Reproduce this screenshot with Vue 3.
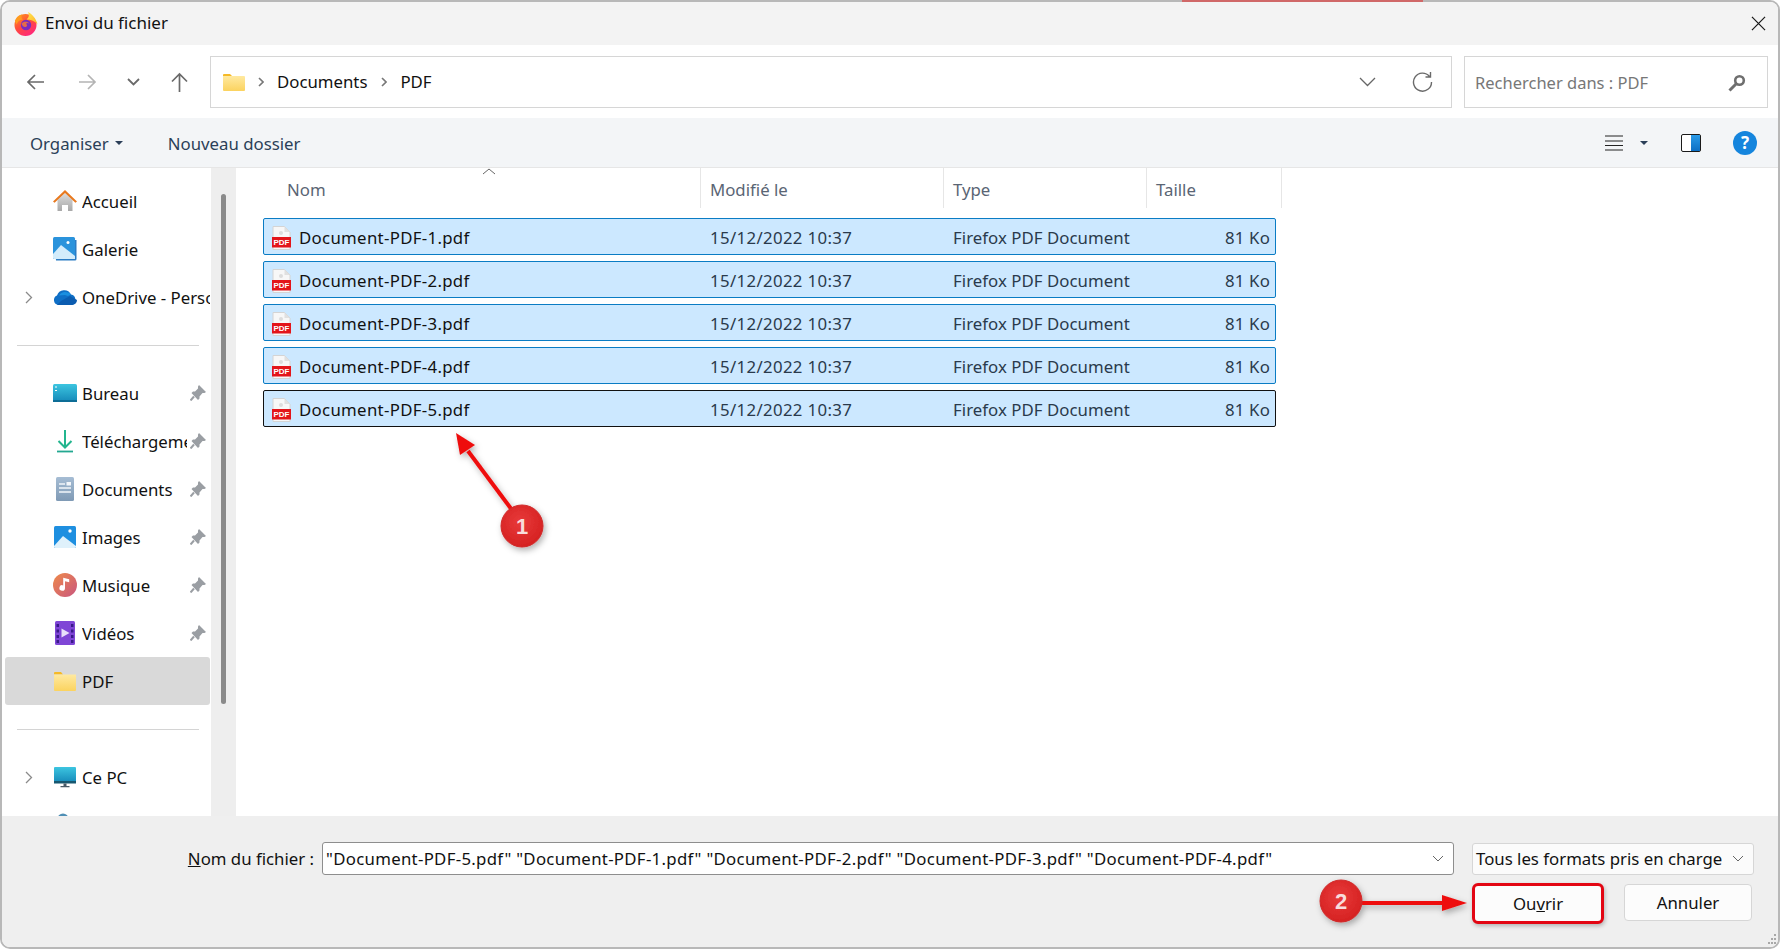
<!--
Boîte de dialogue Windows "Envoi du fichier"
-->
<template>
  <div class="page">
    <div class="behind-strip"></div>
    <div class="dialog">
      <div class="titlebar">
        <svg class="fx" viewBox="0 0 24 24">
          <circle cx="11.5" cy="13" r="11" fill="url(#fxBody)" />
          <path d="M14 0c3.500 2 8 5.500 9.500 12.500C21 9 17 7.500 12.500 7.500 15 6 15.500 3 14 0z" fill="url(#fxFlame)" />
          <path d="M.8 9C2.500 4.500 5.500 2.800 8 2.500 7 4.800 7.500 6.500 9 7.500 5.500 8 3.500 9.500 2.800 12.500z" fill="#ff9a1f" />
          <circle cx="12" cy="13" r="5.200" fill="#7a2bbf" />
          <path d="M7.500 11.500c2-2.500 6-2.500 8 0-2-1-3-.5-3.500.5 1.500.5 1.500 2.500-.5 3-2 .3-3.500-1.500-4-3.500z" fill="#ff7a2a" opacity=".8" />
        </svg>
        <span class="title">Envoi du fichier</span>
        <svg class="close" viewBox="0 0 16 16"><path d="M1 1l14 14M15 1L1 15" stroke="#1a1a1a" stroke-width="1.3" /></svg>
      </div>

      <div class="navbar">
        <div class="navbtn">
          <svg width="19" height="18" viewBox="0 0 19 18"><path d="M18 9H2M9 2L2 9l7 7" fill="none" stroke="#6a6a6a" stroke-width="1.7" /></svg>
        </div>
        <div class="navbtn">
          <svg width="19" height="18" viewBox="0 0 19 18"><path d="M1 9h16M10 2l7 7-7 7" fill="none" stroke="#b4b4b4" stroke-width="1.7" /></svg>
        </div>
        <div class="navbtn small">
          <svg width="13" height="8" viewBox="0 0 13 8"><path d="M1 1l5.500 5.500L12 1" fill="none" stroke="#6a6a6a" stroke-width="1.8" /></svg>
        </div>
        <div class="navbtn">
          <svg width="19" height="20" viewBox="0 0 19 20"><path d="M9.500 20V2M2 9.500l7.500-7.500L17 9.500" fill="none" stroke="#6a6a6a" stroke-width="1.7" /></svg>
        </div>
        <div class="address">
          <svg class="addr-folder" width="22" height="18" viewBox="0 0 22 18">
            <path d="M0 2a1 1 0 0 1 1-1h6l2 2h-9z" fill="#f5b926" />
            <path d="M0 3h21a1 1 0 0 1 1 1v13a1 1 0 0 1-1 1H1a1 1 0 0 1-1-1z" fill="url(#folderFill)" />
          </svg>
          <svg class="crumb-sep" width="6" height="10" viewBox="0 0 6 10"><path d="M1 1l4 4-4 4" fill="none" stroke="#777" stroke-width="1.6" /></svg>
          <span class="crumb">Documents</span>
          <svg class="crumb-sep" width="6" height="10" viewBox="0 0 6 10"><path d="M1 1l4 4-4 4" fill="none" stroke="#777" stroke-width="1.6" /></svg>
          <span class="crumb">PDF</span>
          <svg class="addr-chevron" width="17" height="10" viewBox="0 0 17 10"><path d="M1 1l7.500 7.500L16 1" fill="none" stroke="#666" stroke-width="1.3" /></svg>
          <svg class="addr-refresh" width="21" height="21" viewBox="0 0 21 21"><path d="M17.500 5.500A9 9 0 1 0 19.500 11M18.500 1v5h-5" fill="none" stroke="#6a6a6a" stroke-width="1.4" /></svg>
        </div>
        <div class="search">
          <span>Rechercher dans : PDF</span>
          <svg width="18" height="18" viewBox="0 0 18 18"><circle cx="11.500" cy="6.500" r="4.300" fill="none" stroke="#6f6f6f" stroke-width="2.6" /><path d="M8 10l-6.500 6.500" stroke="#6f6f6f" stroke-width="3" /></svg>
        </div>
      </div>

      <div class="toolbar">
        <span class="tool">Organiser</span>
        <span class="tool-caret"></span>
        <span class="tool new-folder">Nouveau dossier</span>
        <svg class="view-list" width="18" height="16" viewBox="0 0 18 16"><path d="M0 1h18M0 6h18M0 10.500h18M0 15h18" stroke="#222" stroke-width="1" /></svg>
        <span class="tool-caret view-caret"></span>
        <svg class="pane" width="20" height="18" viewBox="0 0 20 18">
          <rect x=".5" y=".5" width="19" height="17" rx="1.5" fill="#fff" stroke="#1a1a1a" />
          <rect x="10" y="1" width="9" height="16" fill="url(#paneFill)" />
        </svg>
        <div class="help">?</div>
      </div>

      <div class="body">
        <aside class="sidebar">
          <template v-for="item in navItems" :key="item.label || item.id">
            <div v-if="item.divider" class="nav-divider"><i></i></div>
            <div v-else class="nav-row" :class="{ active: item.active }">
              <svg v-if="item.expand" class="expand" width="8" height="13" viewBox="0 0 8 13"><path d="M1 1l5.500 5.500L1 12" fill="none" stroke="#8a8a8a" stroke-width="1.3" /></svg>
              <span v-else class="expand"></span>
              <svg class="nav-icon" viewBox="0 0 24 24">
                <template v-if="item.icon === 'home'">
                  <path d="M4.500 11L12 4l7.500 7v11h-4.500v-6H9v6H4.500z" fill="url(#homeFill)" />
                  <path d="M0 12.500L12 1l12 11.500-1.600 1.300L12 4 1.600 13.800z" fill="#e8791f" />
                </template>
                <template v-else-if="item.icon === 'gallery'">
                  <path d="M2 3h21.500v19a1.500 1.500 0 0 1-1.500 1.500H3z" fill="#2b7cc4" />
                  <rect y="0" width="22" height="22" rx="1.5" fill="#2a93dc" />
                  <circle cx="15" cy="5.500" r="1.500" fill="#fff" />
                  <path d="M0 17l8-9 14 11v3H1.500A1.500 1.500 0 0 1 0 20.500z" fill="#d3ecfb" />
                </template>
                <template v-else-if="item.icon === 'cloud'">
                  <path d="M5 20A5 5 0 0 1 4 10.500 7.500 7.500 0 0 1 18 9.500 5.500 5.500 0 0 1 19 20z" fill="#0f6fc6" />
                  <path d="M4 20h15a5 5 0 0 0 5-5l-7-4-9 5z" fill="#0b5cb0" />
                  <path d="M6 10.500A7.500 7.500 0 0 1 18 9.500l-3 1.500-3-1z" fill="#1a8fe0" />
                </template>
                <template v-else-if="item.icon === 'desktop'">
                  <rect y="3" width="24" height="18" rx="1.5" fill="url(#deskFill)" />
                  <path d="M2 6h2M2 9.500h2" stroke="#fff" stroke-width="1.2" />
                  <rect y="19" width="24" height="2" fill="#0d6d96" />
                </template>
                <template v-else-if="item.icon === 'download'">
                  <path d="M12 1v17M5.500 12l6.500 6.500 6.500-6.500" fill="none" stroke="#23b58e" stroke-width="2" />
                  <path d="M4 22.500h16" stroke="#23a891" stroke-width="1.8" />
                </template>
                <template v-else-if="item.icon === 'doc'">
                  <rect x="3" width="18" height="24" rx="1.5" fill="url(#docFill)" />
                  <path d="M6 7h6M6 11h12M6 15h12" stroke="#f2f6fa" stroke-width="1.4" />
                  <rect x="13.500" y="5" width="4.500" height="3.500" fill="#f2f6fa" />
                </template>
                <template v-else-if="item.icon === 'image'">
                  <rect x="1" y="1" width="22" height="22" rx="1.5" fill="#1e8fe0" />
                  <circle cx="17" cy="6" r="1.700" fill="#fff" />
                  <path d="M1 21l9-10 13 10v.5a1.500 1.500 0 0 1-1.500 1.500h-19A1.500 1.500 0 0 1 1 21.500z" fill="#dff1fb" />
                </template>
                <template v-else-if="item.icon === 'music'">
                  <circle cx="12" cy="12" r="12" fill="url(#musicFill)" />
                  <path d="M12 5.500v9.500a2.800 2.800 0 1 1-1.800-2.600V4.800l6 1.500v3l-4.200-1z" fill="#fff" />
                </template>
                <template v-else-if="item.icon === 'video'">
                  <rect x="2" width="20" height="24" rx="1.5" fill="#7f46d6" />
                  <path d="M3.500 3h2.500v3H3.500zM3.500 8.500h2.500v3H3.500zM3.500 14h2.500v3H3.500zM3.500 19h2.500v3H3.500zM18 3h2.500v3H18zM18 8.500h2.500v3H18zM18 14h2.500v3H18zM18 19h2.500v3H18z" fill="#3a1a8a" />
                  <path d="M8.500 7.500l8 4.500-8 4.500z" fill="#e8e0fa" />
                </template>
                <template v-else-if="item.icon === 'folder'">
                  <path d="M1 4a1 1 0 0 1 1-1h6l2 2.500H1z" fill="#f5b926" />
                  <path d="M1 5.500h22V21a1 1 0 0 1-1 1H2a1 1 0 0 1-1-1z" fill="url(#folderFill)" />
                </template>
                <template v-else-if="item.icon === 'pc'">
                  <rect x="1" y="2" width="22" height="16" rx="1" fill="url(#deskFill)" />
                  <rect x="1" y="16" width="22" height="2.5" fill="#17576f" />
                  <path d="M10.500 18.500h3v2.500h-3zM7.500 21h9v1.200h-9z" fill="#4a5a66" />
                </template>
                <template v-else-if="item.icon === 'network'">
                  <circle cx="10" cy="6" r="5.500" fill="#4f8fb5" />
                </template>
              </svg>
              <span class="nav-label">{{ item.label }}</span>
              <svg v-if="item.pinned" class="pin" width="16" height="16" viewBox="0 0 16 16">
                <path d="M9 0l7 7-1.500 1h-2l-3 3.500v2L8 15 1.500 8 3 6.500h2l3-3v-2z" fill="#9a9ea3" />
                <path d="M4 11.500L.5 15.500" stroke="#9a9ea3" stroke-width="2" />
              </svg>
            </div>
          </template>
        </aside>

        <div class="gutter"><div class="thumb"></div></div>

        <main class="files">
          <div class="file-header">
            <svg class="sort" width="14" height="7" viewBox="0 0 14 7"><path d="M1 6l6-5 6 5" fill="none" stroke="#666" stroke-width="1" /></svg>
            <div class="col col-name">Nom</div>
            <div class="col col-date">Modifié le</div>
            <div class="col col-type">Type</div>
            <div class="col col-size">Taille</div>
          </div>
          <div class="file-list">
            <div v-for="(file, i) in files" :key="file" class="file-row" :class="{ focused: i === files.length - 1 }">
              <svg class="pdf" width="19" height="24" viewBox="0 0 19 24">
                <path d="M1 .5h11.500L18 6v17.500H1z" fill="#f7f7f7" stroke="#d4d4d4" />
                <path d="M12.500.5V6H18z" fill="#e0e0e0" />
                <circle cx="9" cy="7" r="2" fill="#dcdcdc" />
                <rect y="11" width="19" height="10.500" fill="#e3151a" />
                <text x="9.500" y="19.300" class="pdf-text">PDF</text>
              </svg>
              <span class="f-name">{{ file }}</span>
              <span class="f-date">15/12/2022 10:37</span>
              <span class="f-type">Firefox PDF Document</span>
              <span class="f-size">81 Ko</span>
            </div>
          </div>
        </main>
      </div>

      <footer class="footer">
        <div class="footer-row">
          <label class="name-label"><u>N</u>om du fichier :</label>
          <div class="name-input">
            <span>"Document-PDF-5.pdf" "Document-PDF-1.pdf" "Document-PDF-2.pdf" "Document-PDF-3.pdf" "Document-PDF-4.pdf"</span>
            <svg width="12" height="7" viewBox="0 0 12 7"><path d="M1 1l5 5 5-5" fill="none" stroke="#666" /></svg>
          </div>
          <div class="type-select">
            <span>Tous les formats pris en charge</span>
            <svg width="12" height="7" viewBox="0 0 12 7"><path d="M1 1l5 5 5-5" fill="none" stroke="#666" /></svg>
          </div>
        </div>
        <div class="footer-actions">
          <button class="btn open">Ou<u>v</u>rir</button>
          <button class="btn cancel">Annuler</button>
        </div>
      </footer>

      <svg class="grip" width="9" height="12" viewBox="0 0 9 12">
        <path d="M6 0h2v2H6zM3 4h2v2H3zM6 4h2v2H6zM0 8h2v2H0zM3 8h2v2H3zM6 8h2v2H6z" fill="#a8a8a8" />
      </svg>

      <!-- annotations -->
      <svg class="marks" width="1782" height="950" viewBox="0 0 1782 950">
        <defs>
          <linearGradient id="fxBody" x1="0" y1="0" x2=".6" y2="1"><stop offset="0" stop-color="#ff9a1c" /><stop offset=".55" stop-color="#ff4a3d" /><stop offset="1" stop-color="#ff2a78" /></linearGradient>
          <linearGradient id="fxFlame" x1="0" y1="0" x2="1" y2="1"><stop offset="0" stop-color="#ffe84d" /><stop offset="1" stop-color="#ffb02a" /></linearGradient>
          <linearGradient id="folderFill" x1="0" y1="0" x2="0" y2="1"><stop offset="0" stop-color="#ffe9a0" /><stop offset="1" stop-color="#fbd35f" /></linearGradient>
          <linearGradient id="paneFill" x1="0" y1="0" x2="0" y2="1"><stop offset="0" stop-color="#2a9be8" /><stop offset="1" stop-color="#0d6fc4" /></linearGradient>
          <linearGradient id="homeFill" x1="0" y1="0" x2="0" y2="1"><stop offset="0" stop-color="#dcdcdc" /><stop offset="1" stop-color="#a8a8a8" /></linearGradient>
          <linearGradient id="deskFill" x1="0" y1="0" x2="0" y2="1"><stop offset="0" stop-color="#3cc5e0" /><stop offset="1" stop-color="#1488b8" /></linearGradient>
          <linearGradient id="docFill" x1="0" y1="0" x2="0" y2="1"><stop offset="0" stop-color="#a6bdd4" /><stop offset="1" stop-color="#7f9ab5" /></linearGradient>
          <linearGradient id="musicFill" x1="0" y1="0" x2="1" y2="1"><stop offset="0" stop-color="#ee8a4a" /><stop offset="1" stop-color="#c9567f" /></linearGradient>
          <radialGradient id="badgeFill" cx=".45" cy=".4" r=".65"><stop offset="0" stop-color="#e83a3a" /><stop offset="1" stop-color="#d42020" /></radialGradient>
          <filter id="soft" x="-30%" y="-30%" width="160%" height="160%"><feDropShadow dx="2" dy="3" stdDeviation="3" flood-color="#000" flood-opacity=".3" /></filter>
        </defs>
        <g filter="url(#soft)">
          <path d="M468 451l44 59" stroke="#ee1111" stroke-width="4" />
          <path d="M456 433l19 12-15 10z" fill="#ee1111" />
          <circle cx="522" cy="526" r="21" fill="url(#badgeFill)" stroke="#cf2a2a" />
        </g>
        <text x="522" y="534" class="badge-num">1</text>
        <g filter="url(#soft)">
          <path d="M1360 903h84" stroke="#ee1111" stroke-width="4" />
          <path d="M1467 903l-25-8v16z" fill="#ee1111" />
          <circle cx="1341" cy="901" r="21" fill="url(#badgeFill)" stroke="#cf2a2a" />
        </g>
        <text x="1341" y="909" class="badge-num">2</text>
      </svg>
    </div>
  </div>
</template>

<script setup>
const navItems = [
  { label: "Accueil", icon: "home" },
  { label: "Galerie", icon: "gallery" },
  { label: "OneDrive - Personal", icon: "cloud", expand: true },
  { divider: true, id: "d1" },
  { label: "Bureau", icon: "desktop", pinned: true },
  { label: "Téléchargements", icon: "download", pinned: true },
  { label: "Documents", icon: "doc", pinned: true },
  { label: "Images", icon: "image", pinned: true },
  { label: "Musique", icon: "music", pinned: true },
  { label: "Vidéos", icon: "video", pinned: true },
  { label: "PDF", icon: "folder", active: true },
  { divider: true, id: "d2" },
  { label: "Ce PC", icon: "pc", expand: true },
  { id: "network", icon: "network" },
];

const files = [
  "Document-PDF-1.pdf",
  "Document-PDF-2.pdf",
  "Document-PDF-3.pdf",
  "Document-PDF-4.pdf",
  "Document-PDF-5.pdf",
];
</script>

<style>
html,
body {
  margin: 0;
  background: #fff;
}
</style>

<style scoped>
.page {
  position: relative;
  width: 1782px;
  height: 950px;
  overflow: hidden;
}

/* bout de la fenêtre derrière le dialogue */
.behind-strip {
  position: absolute;
  left: 1182px;
  top: 0;
  width: 241px;
  height: 2px;
  background: #d06868;
  z-index: 1;
}

.dialog {
  position: relative;
  width: 1780px;
  height: 949px;
  box-sizing: border-box;
  border: 2px solid #b8b8b8;
  border-radius: 10px;
  overflow: hidden;
  display: flex;
  flex-direction: column;
  background: #fff;
  font-family: "Noto Sans", "Liberation Sans", sans-serif;
  font-size: 16.8px;
  color: #111;
}

.titlebar {
  height: 43px;
  flex: none;
  display: flex;
  align-items: center;
  padding: 0 0 0 12px;
  background: #f3f3f3;
}

.fx {
  width: 24px;
  height: 24px;
  margin-right: 7px;
}

.title {
  font-size: 17px;
  margin-top: -2px;
}

.close {
  width: 15px;
  height: 15px;
  margin-left: auto;
  margin-right: 12px;
}

.navbar {
  height: 73px;
  flex: none;
  display: flex;
  align-items: center;
  padding: 0 10px 0 7px;
  box-sizing: border-box;
  background: #fff;
}

.navbtn {
  width: 52px;
  display: flex;
  justify-content: center;
}

.navbtn.small {
  width: 40px;
}

.address,
.search {
  height: 52px;
  box-sizing: border-box;
  border: 1px solid #d6d6d6;
  display: flex;
  align-items: center;
  background: #fff;
}

.address {
  flex: 1;
  margin-left: 5px;
  padding-left: 12px;
}

.addr-folder {
  margin-right: 13px;
}

.crumb-sep {
  margin-right: 13px;
}

.crumb {
  margin-right: 14px;
}

.addr-chevron {
  margin-left: auto;
  margin-right: 36px;
}

.addr-refresh {
  margin-right: 18px;
}

.search {
  width: 304px;
  margin-left: 12px;
  padding: 2px 21px 0 10px;
  justify-content: space-between;
  color: #777;
  font-size: 16.5px;
}

.toolbar {
  height: 50px;
  flex: none;
  box-sizing: border-box;
  display: flex;
  align-items: center;
  padding-left: 28px;
  background: #f3f5f7;
  border-bottom: 1px solid #e6e6e6;
}

.tool {
  color: #2b3f58;
  margin-top: 1px;
}

.tool-caret {
  width: 0;
  height: 0;
  margin-left: 6px;
  border: 4px solid transparent;
  border-top: 4px solid #2b3f58;
  border-bottom: 0;
}

.new-folder {
  margin-left: 45px;
}

.view-list {
  margin-left: auto;
}

.view-caret {
  margin-left: 17px;
}

.pane {
  margin-left: 33px;
}

.help {
  width: 24px;
  height: 24px;
  margin-left: 32px;
  margin-right: 21px;
  border-radius: 50%;
  background: #1585dd;
  color: #fff;
  font-size: 17px;
  font-weight: 700;
  line-height: 24px;
  text-align: center;
}

.body {
  flex: 1;
  min-height: 0;
  display: flex;
}

.sidebar {
  width: 209px;
  flex: none;
  box-sizing: border-box;
  padding: 9px 1px 0 3px;
  overflow: hidden;
  background: #fff;
}

.nav-row {
  height: 48px;
  display: flex;
  align-items: center;
  border-radius: 3px;
}

.nav-row.active {
  background: #d9d9d9;
}

.expand {
  width: 8px;
  flex: none;
  margin-left: 20px;
}

.nav-icon {
  width: 24px;
  height: 24px;
  flex: none;
  margin-left: 20px;
}

.nav-label {
  flex: 1;
  min-width: 0;
  margin-left: 5px;
  white-space: nowrap;
  overflow: hidden;
}

.pin {
  flex: none;
  margin: 0 4px 0 3px;
}

.nav-divider {
  height: 48px;
  display: flex;
  align-items: center;
  padding: 0 11px 0 12px;
}

.nav-divider i {
  flex: 1;
  height: 1px;
  background: #d4d4d4;
}

.gutter {
  width: 25px;
  flex: none;
  box-sizing: border-box;
  padding: 26px 0 0 10px;
  background: #eeeeee;
}

.thumb {
  width: 5px;
  height: 510px;
  border-radius: 3px;
  background: #8a8a8a;
}

.files {
  flex: 1;
  min-width: 0;
  background: #fff;
}

.file-header {
  position: relative;
  height: 47px;
  display: flex;
  color: #5a6574;
}

.sort {
  position: absolute;
  left: 246px;
  top: 0;
}

.col {
  height: 40px;
  line-height: 44px;
  box-sizing: border-box;
  padding-left: 9px;
  border-left: 1px solid #e6e6e6;
}

.col-name {
  width: 464px;
  padding-left: 51px;
  border-left: 0;
}

.col-date {
  width: 243px;
}

.col-type {
  width: 203px;
}

.col-size {
  width: 136px;
  border-right: 1px solid #e6e6e6;
}

.file-list {
  display: flex;
  flex-direction: column;
  gap: 6px;
  margin: 3px 0 0 27px;
  width: 1013px;
}

.file-row {
  height: 37px;
  box-sizing: border-box;
  display: flex;
  align-items: center;
  padding: 2px 5px 0 8px;
  background: #cce8ff;
  border: 1px solid #0a7cc4;
  border-radius: 2px;
  color: #2a3a4c;
}

.file-row.focused {
  border-color: #111;
}

.pdf {
  flex: none;
  margin-right: 8px;
}

.pdf-text {
  fill: #fff;
  font-family: "Liberation Sans", sans-serif;
  font-size: 8px;
  font-weight: 700;
  text-anchor: middle;
}

.f-name {
  width: 411px;
  color: #111;
  letter-spacing: 0.32px;
}

.f-date {
  width: 243px;
  letter-spacing: 0.35px;
}

.f-type {
  flex: 1;
  letter-spacing: 0.05px;
}

.f-size {
  flex: none;
  letter-spacing: 0.2px;
}

.footer {
  height: 131px;
  flex: none;
  box-sizing: border-box;
  padding: 26px 0 0;
  background: #efefef;
}

.footer-row {
  display: flex;
  align-items: center;
  padding-right: 24px;
}

.name-label {
  width: 312px;
  flex: none;
  text-align: right;
}

.name-input,
.type-select {
  box-sizing: border-box;
  display: flex;
  align-items: center;
  justify-content: space-between;
  white-space: nowrap;
}

.name-input {
  flex: 1;
  min-width: 0;
  height: 33px;
  margin-left: 8px;
  padding: 0 9px 0 3px;
  background: #fff;
  border: 1px solid #8e8e8e;
  border-radius: 3px;
  letter-spacing: 0.3px;
}

.type-select {
  width: 282px;
  flex: none;
  height: 32px;
  margin-left: 18px;
  padding: 0 9px 0 3px;
  background: #fbfbfb;
  border: 1px solid #d6d6d6;
  border-radius: 3px;
}

.footer-actions {
  display: flex;
  justify-content: flex-end;
  align-items: flex-start;
  gap: 20px;
  margin-top: 8px;
  padding-right: 26px;
}

.btn {
  height: 37px;
  margin-top: 1px;
  box-sizing: border-box;
  font: inherit;
  color: #111;
  background: #fcfcfc;
  border: 1px solid #d6d6d6;
  border-radius: 4px;
}

.btn.open {
  width: 132px;
  height: 41px;
  margin-top: 0;
  border: 3px solid #e30613;
  border-radius: 6px;
  box-shadow: 1px 2px 4px rgba(0, 0, 0, 0.25);
}

.btn.cancel {
  width: 128px;
}

.grip {
  position: absolute;
  right: 1px;
  bottom: 1px;
}

.marks {
  position: absolute;
  left: -2px;
  top: -2px;
  pointer-events: none;
}

.badge-num {
  fill: #f8dcdc;
  font-family: "Liberation Sans", sans-serif;
  font-size: 22px;
  font-weight: 700;
  text-anchor: middle;
}
</style>
